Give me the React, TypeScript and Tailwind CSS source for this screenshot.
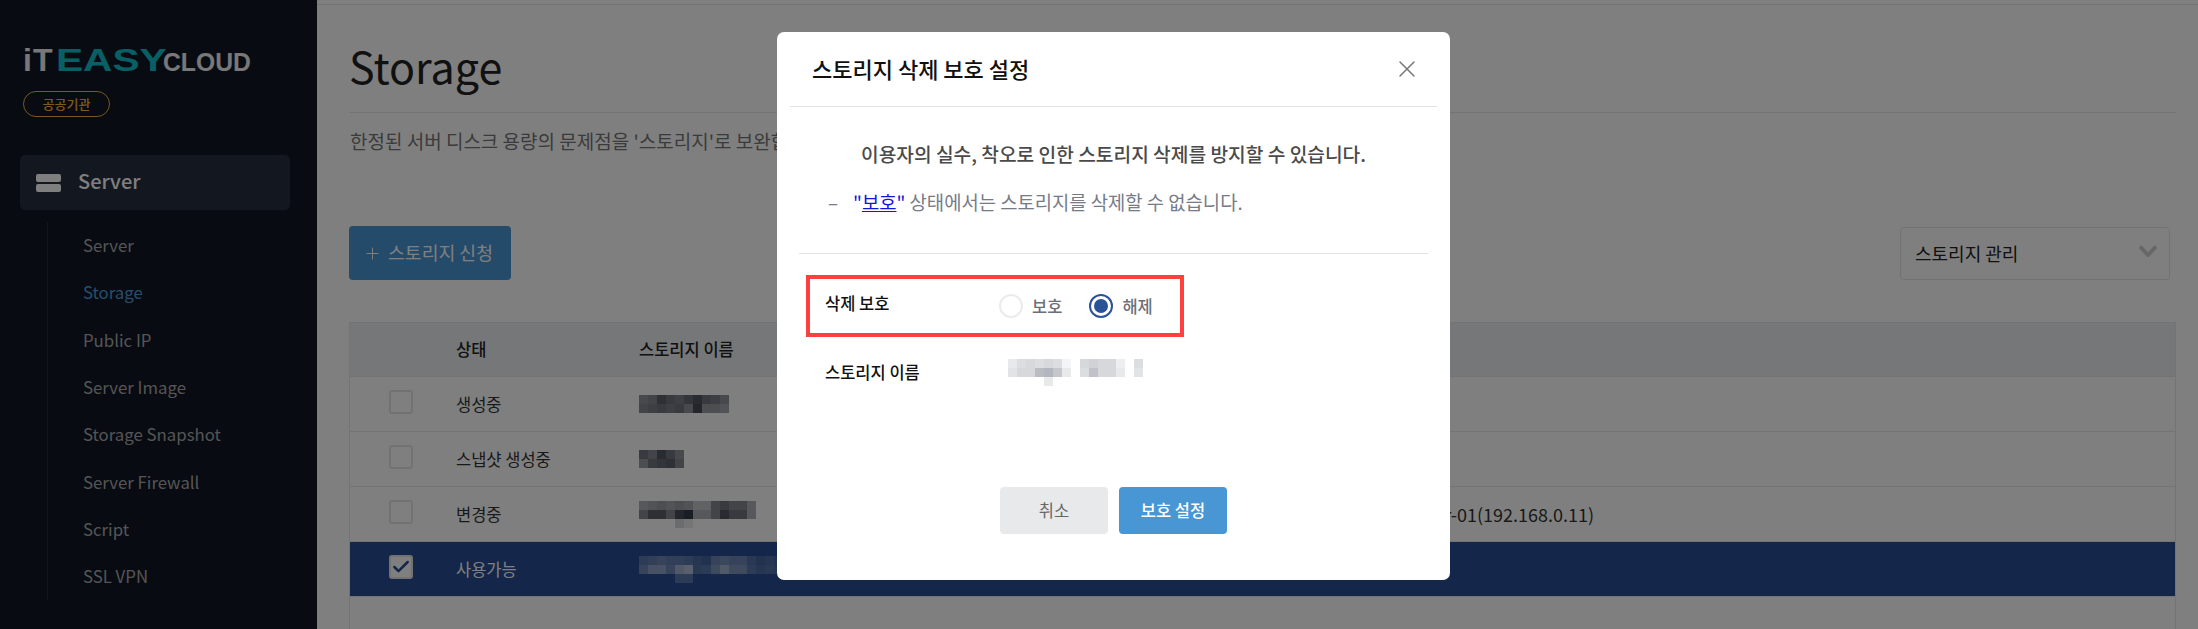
import React from "react";
import { X, Check, Plus } from "lucide-react";

const font = { fontFamily: '"Noto Sans CJK KR", "Noto Sans", sans-serif' };

const navItems = ["Server", "Storage", "Public IP", "Server Image", "Storage Snapshot", "Server Firewall", "Script", "SSL VPN"];

function Mosaic({ rows, cell = 9, tint }: { rows: number[][]; cell?: number; tint: string }) {
  const w = Math.max(...rows.map((r) => r.length)) * cell;
  return (
    <svg width={w} height={rows.length * cell} className="block">
      {rows.map((r, y) =>
        r.map((o, x) => (o > 0 ? <rect key={x + "-" + y} x={x * cell} y={y * cell} width={cell} height={cell} fill={tint} opacity={o} /> : null))
      )}
    </svg>
  );
}

const m1 = [
  [0.55, 0.6, 0.8, 0.7, 0.65, 0.75, 0.85, 0.7, 0.65, 0.55],
  [0.6, 0.65, 0.7, 0.65, 0.7, 0.55, 0.9, 0.5, 0.5, 0.45],
];
const m2 = [
  [0.7, 0.6, 0.85, 0.7, 0.55],
  [0.5, 0.7, 0.75, 0.8, 0.6],
];
const m3 = [
  [0.4, 0.45, 0.5, 0.45, 0.5, 0.45, 0.3, 0.3, 0.6, 0.7, 0.6, 0.6, 0.4],
  [0.6, 0.8, 0.8, 0.6, 0.9, 1, 0.4, 0.4, 0.6, 0.85, 0.7, 0.7, 0.4],
  [0, 0, 0, 0, 0.2, 0.1, 0, 0, 0, 0, 0, 0, 0],
];
const m4 = [
  [0.3, 0.35, 0.4, 0.35, 0.35, 0.3, 0.2, 0.15, 0.4, 0.45, 0.4, 0.4, 0.25, 0.15, 0.2, 0.15],
  [0.4, 0.6, 0.6, 0.4, 0.7, 0.8, 0.25, 0.3, 0.5, 0.7, 0.5, 0.5, 0.3, 0.2, 0.25, 0.2],
  [0, 0, 0, 0, 0.3, 0.3, 0, 0, 0, 0, 0, 0, 0, 0, 0, 0],
];
const m5 = [
  [0.2, 0.3, 0.35, 0.3, 0.35, 0.3, 0.1, 0, 0.35, 0.4, 0.35, 0.35, 0.15, 0, 0.3],
  [0.25, 0.35, 0.35, 0.6, 0.65, 0.5, 0.2, 0, 0.3, 0.55, 0.35, 0.35, 0.2, 0, 0.25],
  [0, 0, 0, 0, 0.2, 0, 0, 0, 0, 0, 0, 0, 0, 0, 0],
];

function Box({ checked }: { checked?: boolean }) {
  return (
    <div className="w-[24px] h-[24px] rounded-[3px] border-2 border-[#e4e4e4] bg-white flex items-center justify-center">
      {checked && <Check size={20} strokeWidth={3} className="text-[#284f94]" />}
    </div>
  );
}

function Row({ status, selected, rows, extra }: { status: string; selected?: boolean; rows: number[][]; extra?: string }) {
  return (
    <div className={`flex items-center h-[55px] border-b border-[#e8e8e8] ${selected ? "bg-[#284f94] text-white" : "bg-white text-[#333]"}`}>
      <div className="w-[106px] pl-[39px] -mt-[4px] shrink-0">
        <Box checked={selected} />
      </div>
      <div className="w-[183px] shrink-0 text-[16.5px]">{status}</div>
      <div className="w-[620px] shrink-0">
        <Mosaic rows={rows} tint={selected ? "#d5dbe8" : "#333a48"} />
      </div>
      {extra && <div className="text-[18px] pl-[140px] whitespace-nowrap">{extra}</div>}
    </div>
  );
}

function Radio({ label, checked }: { label: string; checked?: boolean }) {
  return (
    <div className="flex items-center gap-[9px]">
      {checked ? (
        <div className="w-[24px] h-[24px] rounded-full border-2 border-[#2a5298] flex items-center justify-center">
          <div className="w-[14px] h-[14px] rounded-full bg-[#2a5298]" />
        </div>
      ) : (
        <div className="w-[24px] h-[24px] rounded-full border-2 border-[#ebebeb] bg-white" />
      )}
      <span className="text-[16.5px] text-[#6a6f7a] font-medium">{label}</span>
    </div>
  );
}

export default function App() {
  return (
    <div className="relative h-screen overflow-hidden flex bg-white" style={font}>
      {/* Sidebar */}
      <aside className="w-[317px] shrink-0 bg-[#101624] flex flex-col">
        <div className="pl-[23px] pt-[36px]">
          <div className="flex items-baseline h-[36px] whitespace-nowrap font-bold" style={{ fontFamily: '"Liberation Sans", sans-serif' }}>
            <span className="text-[32px] text-[#f0f0f0] w-[33px] tracking-[1px]">iT</span>
            <span className="text-[32px] text-[#12c0c8] w-[107px] inline-block origin-left scale-x-[1.27]">EASY</span>
            <span className="text-[26px] text-[#f0f0f0] w-[90px] inline-block origin-left scale-x-[0.95]">CLOUD</span>
          </div>
          <div className="mt-[19px] w-[87px] h-[26px] rounded-full border border-[#f0b43c] text-[#f4b93f] text-[13px] font-medium flex items-center justify-center">
            공공기관
          </div>
        </div>
        <div className="ml-[20px] mr-[27px] mt-[38px] h-[55px] rounded-[5px] bg-[#272e3e] flex items-center pl-[16px] gap-[17px]">
          <div className="w-[25px] flex flex-col gap-[2px]">
            <div className="h-[8px] rounded-[2px] bg-white" />
            <div className="h-[8px] rounded-[2px] bg-white" />
          </div>
          <span className="text-[20px] text-white font-medium -mt-[3px]">Server</span>
        </div>
        <div className="ml-[47px] mt-[12px] border-l border-[#232a38] pl-[35px] flex flex-col">
          {navItems.map((n) => (
            <div key={n} className={`h-[47.3px] flex items-center text-[16.8px] ${n === "Storage" ? "text-[#4f9cd8]" : "text-[#aaaaaa]"}`}>
              {n}
            </div>
          ))}
        </div>
      </aside>

      {/* Main */}
      <main className="flex-1 min-w-0 pl-[32px] pr-[22px]">
        <div className="-ml-[32px] -mr-[22px] h-[5px] border-b border-[#e8e8e8]" />
        <h1 className="text-[43px] leading-[60px] text-[#222] mt-[30px]">Storage</h1>
        <div className="border-t border-[#e6e6e6] mt-[17px]" />
        <p className="text-[19px] text-[#777] mt-[14px] leading-[27px] pl-px whitespace-nowrap">한정된 서버 디스크 용량의 문제점을 '스토리지'로 보완합니다.</p>
        <div className="flex justify-between items-center mt-[72px]">
          <button className="w-[162px] h-[54px] rounded-[4px] bg-[#4896d3] text-white text-[18.3px] flex items-center pl-[14px] gap-[6px]">
            <Plus size={19} strokeWidth={1.25} />
            <span>스토리지 신청</span>
          </button>
          <div className="w-[270px] h-[53px] mr-[6px] rounded-[4px] border border-[#e4e4e4] flex items-center justify-between pl-[14px] pr-[12px] text-[18px] text-[#222]">
            <span>스토리지 관리</span>
            <svg width="18" height="12" viewBox="0 0 18 12" className="-mt-[4px]">
              <path d="M1 1.5 L9 10 L17 1.5" fill="none" stroke="#cfcfcf" strokeWidth="4" />
            </svg>
          </div>
        </div>
        <div className="mt-[42px] border-l border-r border-[#e8e8e8] h-[400px]">
          <div className="flex items-center h-[55px] bg-[#eceef0] border-y border-[#e4e6e8] text-[16.5px] font-medium text-[#222]">
            <div className="w-[106px] shrink-0" />
            <div className="w-[183px] shrink-0">상태</div>
            <div>스토리지 이름</div>
          </div>
          <Row status="생성중" rows={m1} />
          <Row status="스냅샷 생성중" rows={m2} />
          <Row status="변경중" rows={m3} extra="server-01(192.168.0.11)" />
          <Row status="사용가능" rows={m4} selected />
        </div>
      </main>

      {/* Dim overlay */}
      <div className="absolute inset-0 bg-black/50" />

      {/* Modal */}
      <div className="absolute left-[777px] top-[32px] w-[673px] h-[548px] bg-white rounded-[7px] flex flex-col">
        <div className="flex items-center justify-between pl-[35px] pr-[29px] h-[74px]">
          <h2 className="text-[22px] font-medium text-[#111] -mt-[2px]">스토리지 삭제 보호 설정</h2>
          <X size={28} strokeWidth={1.25} className="text-[#777]" />
        </div>
        <div className="mx-[13px] border-t border-[#e2e2e2]" />
        <p className="text-[19.2px] font-medium text-[#4a4a4a] text-center mt-[33px] leading-[28px]">
          이용자의 실수, 착오로 인한 스토리지 삭제를 방지할 수 있습니다.
        </p>
        <div className="flex items-center mt-[20px] pl-[51px] text-[18.8px] text-[#767b87] leading-[28px]">
          <span className="w-[25px]">–</span>
          <span>
            <span className="text-[#1414e0]">"<span className="underline">보호</span>"</span> 상태에서는 스토리지를 삭제할 수 없습니다.
          </span>
        </div>
        <div className="mx-[22px] border-t border-[#e2e2e2] mt-[37px]" />
        <div className="ml-[29px] mt-[21px] w-[378px] h-[62px] border-[4px] border-[#ff4040] flex items-center pl-[15px]">
          <span className="w-[174px] text-[16.5px] font-medium text-[#111] -mt-[6px]">삭제 보호</span>
          <div className="flex gap-[27px]">
            <Radio label="보호" />
            <Radio label="해제" checked />
          </div>
        </div>
        <div className="ml-[48px] mt-[20px] flex items-center h-[30px]">
          <span className="w-[183px] text-[16.5px] font-medium text-[#111]">스토리지 이름</span>
          <Mosaic rows={m5} tint="#8b8f9b" />
        </div>
        <div className="flex justify-center gap-[11px] mt-[100px]">
          <button className="w-[108px] h-[47px] rounded-[4px] bg-[#e8e9eb] text-[#666] text-[16.5px]">취소</button>
          <button className="w-[108px] h-[47px] rounded-[4px] bg-[#4896d3] text-white text-[16.5px] font-medium">보호 설정</button>
        </div>
      </div>
    </div>
  );
}
